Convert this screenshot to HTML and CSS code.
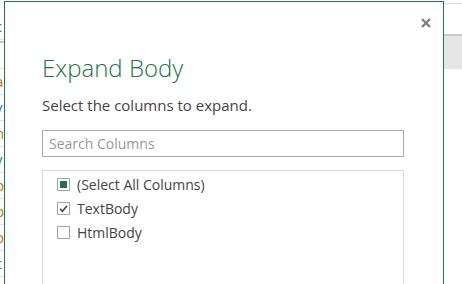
FILE: index.html
```html
<!DOCTYPE html>
<html>
<head>
    <title>Expand Body</title>
    <meta name="viewport" content="width=device-width, initial-scale=1.0">
    <link rel="stylesheet" href="styles.css">
</head>
<body>
    <div class="screen">
        <div class="sheet-left">
            <div class="cell blue">c</div>
            <div class="cell head"></div>
            <div class="cell blue">i</div>
            <div class="cell orange">a</div>
            <div class="cell blue">v</div>
            <div class="cell orange">n</div>
            <div class="cell blue">v</div>
            <div class="cell orange">b</div>
            <div class="cell orange">b</div>
            <div class="cell orange">o</div>
            <div class="cell blue">c</div>
        </div>

        <section class="dialog">
            <div class="dialog-head">
                <button class="close" title="Close">
                    <svg width="10" height="10" viewBox="0 0 10 10">
                        <path d="M1 1 L9 9 M9 1 L1 9" stroke="#7f7f7f" stroke-width="2.4"/>
                    </svg>
                </button>
            </div>
            <div class="dialog-body">
                <h1>Expand Body</h1>
                <p class="hint">Select the columns to expand.</p>
                <div class="search">Search Columns</div>
                <ul class="columns">
                    <li><span class="box partial"></span>(Select All Columns)</li>
                    <li>
                        <span class="box">
                            <svg width="11" height="11" viewBox="0 0 11 11">
                                <path d="M2 5.8 L4.4 8.2 L9 2.8" fill="none" stroke="#444" stroke-width="1.6"/>
                            </svg>
                        </span>TextBody
                    </li>
                    <li><span class="box"></span>HtmlBody</li>
                </ul>
            </div>
        </section>

        <div class="sheet-right">
            <div class="band-top"></div>
            <div class="band-fill"></div>
        </div>
    </div>
</body>
</html>
```

FILE: styles.css
```css
html, body {
    margin: 0;
    height: 100%;
    overflow: hidden;
    background: #fff;
}
body {
    font-family: "Open Sans", "Noto Sans", sans-serif;
    color: #444;
}
.screen {
    display: flex;
    height: 284px;
}
.sheet-left {
    width: 4px;
    overflow: hidden;
    padding-top: 14px;
}
.sheet-left .cell {
    width: 10px;
    margin-left: -5px;
    height: 26px;
    line-height: 24px;
    font-size: 15px;
    border-bottom: 1px solid #e4e4e4;
    box-sizing: border-box;
}
.sheet-left .head {
    height: 3px;
    border-bottom: 2px solid #c8c8c8;
}
.blue {
    color: #2f78c8;
}
.orange {
    color: #b8741f;
}
.dialog {
    margin-top: 1px;
    width: 440px;
    box-sizing: border-box;
    border: 1px solid #217346;
    border-bottom: none;
    background: #fff;
}
.dialog-head {
    display: flex;
    justify-content: flex-end;
    height: 50px;
    padding: 16px 12px 0 0;
    box-sizing: border-box;
}
.close {
    background: none;
    border: none;
    padding: 0;
    width: 10px;
    height: 10px;
    cursor: pointer;
}
.close svg {
    display: block;
}
.dialog-body {
    padding: 0 39px 0 37px;
}
h1 {
    margin: 0;
    font-size: 24px;
    line-height: 32px;
    font-weight: 300;
    color: #217346;
}
.hint {
    margin: 11px 0 0;
    font-size: 15px;
    line-height: 20px;
    color: #444;
}
.search {
    margin-top: 15px;
    height: 27px;
    box-sizing: border-box;
    border: 1px solid #ababab;
    padding: 0 6px;
    font-size: 14px;
    line-height: 25px;
    color: #999;
}
.columns {
    list-style: none;
    margin: 13px 0 0;
    padding: 1px 0 0 14px;
    height: 120px;
    border: 1px solid #d9d9d9;
    border-bottom: none;
}
.columns li {
    display: flex;
    align-items: center;
    height: 24px;
    font-size: 14px;
    color: #444;
}
.box {
    width: 13px;
    height: 13px;
    box-sizing: border-box;
    border: 1px solid #a6a6a6;
    margin-right: 7px;
    display: flex;
    align-items: center;
    justify-content: center;
    background: #fff;
}
.box.partial::after {
    content: "";
    width: 7px;
    height: 7px;
    background: #217346;
}
.sheet-right {
    flex: 1;
}
.band-top {
    margin-top: 3px;
    height: 1px;
    background: #dadada;
}
.band-fill {
    margin-top: 30px;
    height: 33px;
    border-top: 2px solid #c9c9c9;
    background: #e6e6e6;
}
```
